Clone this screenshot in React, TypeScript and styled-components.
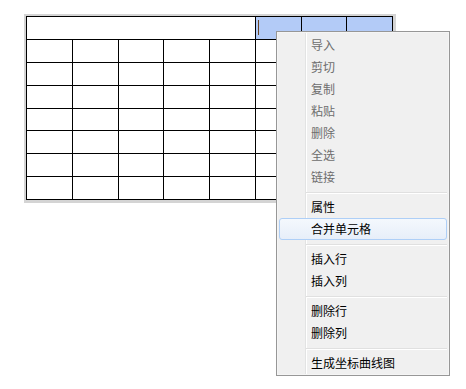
import styled, {createGlobalStyle} from "styled-components";

const GlobalStyle = createGlobalStyle`
  html, body {
    margin: 0;
    padding: 0;
    background: #ffffff;
  }
  body {
    font-family: "Noto Sans CJK SC", "Liberation Sans", sans-serif;
  }
`

type MenuEntry =
  | {kind: 'item', label: string, disabled?: boolean, active?: boolean}
  | {kind: 'separator'}

const menuEntries: MenuEntry[] = [
  {kind: 'item', label: '导入', disabled: true},
  {kind: 'item', label: '剪切', disabled: true},
  {kind: 'item', label: '复制', disabled: true},
  {kind: 'item', label: '粘贴', disabled: true},
  {kind: 'item', label: '删除', disabled: true},
  {kind: 'item', label: '全选', disabled: true},
  {kind: 'item', label: '链接', disabled: true},
  {kind: 'separator'},
  {kind: 'item', label: '属性'},
  {kind: 'item', label: '合并单元格', active: true},
  {kind: 'separator'},
  {kind: 'item', label: '插入行'},
  {kind: 'item', label: '插入列'},
  {kind: 'separator'},
  {kind: 'item', label: '删除行'},
  {kind: 'item', label: '删除列'},
  {kind: 'separator'},
  {kind: 'item', label: '生成坐标曲线图'},
]

const COLUMNS = 8
const BODY_ROWS = 7

export default function App() {
  return (
    <>
      <GlobalStyle/>
      <StyledPage>
        <StyledTableFrame>
          <StyledGrid>
            <StyledCell span={5}/>
            <StyledCell selected>
              <StyledCaret/>
            </StyledCell>
            <StyledCell selected/>
            <StyledCell selected/>
            {Array.from({length: BODY_ROWS * COLUMNS}).map((_, i) => (
              <StyledCell key={i}/>
            ))}
          </StyledGrid>
        </StyledTableFrame>

        <StyledMenu>
          {menuEntries.map((entry, i) =>
            entry.kind === 'separator' ? (
              <StyledSeparator key={i}/>
            ) : (
              <StyledMenuItem key={i} disabled={entry.disabled} active={entry.active}>
                {entry.label}
              </StyledMenuItem>
            )
          )}
        </StyledMenu>
      </StyledPage>
    </>
  )
}

const StyledPage = styled.div`
  position: relative;
  width: 466px;
  height: 389px;
  padding: 14px 0 0 24px;
  box-sizing: border-box;
`

const StyledTableFrame = styled.div`
  display: inline-block;
  border-style: solid;
  border-color: #d4d4d4;
  border-width: 2px 3px 3px 2px;
`

const StyledGrid = styled.div`
  display: grid;
  grid-template-columns: repeat(${COLUMNS}, 1fr);
  grid-template-rows: repeat(${BODY_ROWS + 1}, 1fr);
  gap: 1px;
  padding: 1px;
  width: 367px;
  height: 184px;
  box-sizing: border-box;
  background: #000000;
`

interface StyledCellProps {
  span?: number
  selected?: boolean
}

const StyledCell = styled.div.withConfig({
  shouldForwardProp: (prop) => prop !== 'span' && prop !== 'selected',
})<StyledCellProps>`
  grid-column: span ${props => props.span ?? 1};
  display: flex;
  align-items: center;
  padding-left: 2px;
  background: ${props => props.selected ? '#b3cbf7' : '#ffffff'};
`

const StyledCaret = styled.div`
  flex: 0 0 1px;
  width: 1px;
  height: 15px;
  background: #6b4422;
`

const StyledMenu = styled.div`
  position: absolute;
  left: 276px;
  top: 31px;
  width: 174px;
  box-sizing: border-box;
  padding: 2px 2px 1px 2px;
  border: 1px solid #979797;
  box-shadow: inset 0 0 0 1px #f5f5f5;
  background:
    linear-gradient(to right,
      transparent 28px,
      #e2e3e3 28px, #e2e3e3 29px,
      #ffffff 29px, #ffffff 30px,
      transparent 30px),
    #f0f0f0;
  background-origin: border-box;
  background-position: 1px 0;
  background-repeat: no-repeat;
  display: flex;
  flex-direction: column;
`

interface StyledMenuItemProps {
  disabled?: boolean
  active?: boolean
}

const StyledMenuItem = styled.div.withConfig({
  shouldForwardProp: (prop) => prop !== 'disabled' && prop !== 'active',
})<StyledMenuItemProps>`
  height: 22px;
  box-sizing: border-box;
  padding-left: 31px;
  font-size: 12px;
  line-height: 20px;
  white-space: nowrap;
  border: 1px solid ${props => props.active ? '#aecff7' : 'transparent'};
  border-radius: 3px;
  color: ${props => props.disabled ? '#6d6d6d' : '#000000'};
  background: ${props => props.active
    ? 'linear-gradient(to bottom, #f4f8fd, #e7eef9)'
    : 'transparent'};
`

const StyledSeparator = styled.div`
  height: 8px;
  box-sizing: border-box;
  padding-top: 4px;
  margin-left: 27px;

  &::before {
    content: '';
    display: block;
    height: 1px;
    background: #e0e0e0;
    border-bottom: 1px solid #ffffff;
  }
`
